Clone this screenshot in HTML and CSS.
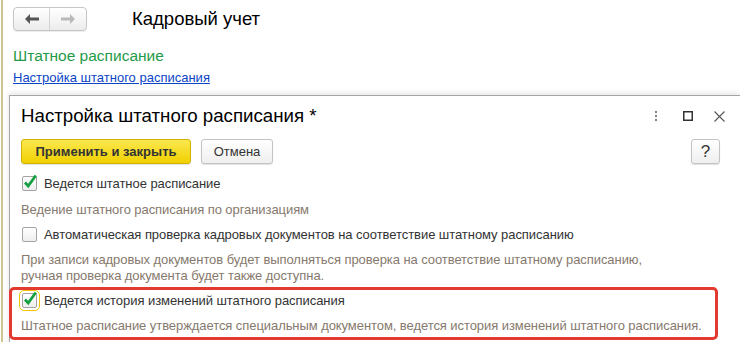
FILE: index.html
```html
<!DOCTYPE html>
<html lang="ru">
  <head>
    <meta charset="UTF-8" />
    <meta name="viewport" content="width=device-width, initial-scale=1.0" />
    <title>Кадровый учет</title>
    <link rel="stylesheet" href="styles.css">
  </head>
  <body>
    <div class="page">
      <div class="head">
        <div class="nav">
          <button class="nav-btn back">
            <svg width="14" height="10" viewBox="0 0 14 10"><path d="M0 5 L5 0 L5 3.5 L14 3.5 L14 6.5 L5 6.5 L5 10 Z" fill="#555" /></svg>
          </button>
          <button class="nav-btn fwd">
            <svg width="14" height="10" viewBox="0 0 14 10"><path d="M14 5 L9 0 L9 3.5 L0 3.5 L0 6.5 L9 6.5 L9 10 Z" fill="#b9b9b9" /></svg>
          </button>
        </div>
        <div class="page-title">Кадровый учет</div>
      </div>

      <div class="section-title">Штатное расписание</div>
      <a class="link" href="#">Настройка штатного расписания</a>

      <div class="dialog">
        <div class="dialog-head">
          <div class="dialog-title">Настройка штатного расписания *</div>
          <div class="win-ctrls">
            <svg class="dots" width="4" height="12" viewBox="0 0 4 12"><circle cx="2" cy="2" r="1.2" fill="#888" /><circle cx="2" cy="6" r="1.2" fill="#888" /><circle cx="2" cy="10" r="1.2" fill="#888" /></svg>
            <svg class="maxi" width="10" height="10" viewBox="0 0 10 10"><rect x="0.75" y="0.75" width="8.5" height="8.5" fill="none" stroke="#333" stroke-width="1.5" /></svg>
            <svg width="11" height="11" viewBox="0 0 11 11"><path d="M0.5 0.5 L10.5 10.5 M10.5 0.5 L0.5 10.5" stroke="#555" stroke-width="1.1" /></svg>
          </div>
        </div>

        <div class="toolbar">
          <button class="btn btn-main">Применить и закрыть</button>
          <button class="btn btn-cancel">Отмена</button>
          <button class="btn btn-help">?</button>
        </div>

        <label class="check-row row-1">
          <span class="check">
            <svg width="16" height="16" viewBox="0 0 16 16"><path d="M3 7.5 L6.2 11 L13.8 0.5" fill="none" stroke="#17a043" stroke-width="2.8" /></svg>
          </span>
          Ведется штатное расписание
        </label>
        <div class="hint hint-1">Ведение штатного расписания по организациям</div>

        <label class="check-row row-2">
          <span class="check"></span>
          Автоматическая проверка кадровых документов на соответствие штатному расписанию
        </label>
        <div class="hint hint-2">При записи кадровых документов будет выполняться проверка на соответствие штатному расписанию,<br>ручная проверка документа будет также доступна.</div>

        <div class="marked">
          <label class="check-row">
            <span class="check focused">
              <svg width="16" height="16" viewBox="0 0 16 16"><path d="M3 7.5 L6.2 11 L13.8 0.5" fill="none" stroke="#17a043" stroke-width="2.8" /></svg>
            </span>
            Ведется история изменений штатного расписания
          </label>
          <div class="hint hint-3">Штатное расписание утверждается специальным документом, ведется история изменений штатного расписания.</div>
        </div>
      </div>
    </div>
  </body>
</html>
```

FILE: styles.css
```css
body {
  margin: 0;
  background-color: white;
  font-family: "Liberation Sans", Arial, sans-serif;
  color: #333;
  overflow: hidden;
}

.page {
  margin-left: 1px;
  border-left: 2px solid #cfc48f;
  min-height: 100vh;
  padding-left: 10px;
}

.head {
  display: flex;
  align-items: center;
  padding-top: 7px;
}

.nav {
  display: flex;
  height: 22px;
  border: 1px solid #c6c6c6;
  border-radius: 4px;
  background: linear-gradient(#ffffff, #ececec);
  box-shadow: 0 1px 1px rgba(0, 0, 0, 0.08);
}

.nav-btn {
  display: flex;
  align-items: center;
  justify-content: center;
  width: 36px;
  padding: 0;
  border: none;
  background: transparent;
}

.nav-btn.back {
  border-right: 1px solid #d4d4d4;
}

.page-title {
  margin-left: 45px;
  font-size: 18.5px;
  color: black;
  line-height: 24px;
}

.section-title {
  margin-top: 15px;
  font-size: 15.5px;
  line-height: 20px;
  color: #1f9a48;
}

.link {
  display: block;
  margin-top: 4px;
  font-size: 13px;
  line-height: 16px;
  color: #0b45c6;
}

.dialog {
  margin-top: 9px;
  margin-left: -4px;
  padding-left: 11px;
  border-top: 1px solid #a5a5a5;
  border-left: 1px solid #a5a5a5;
  box-shadow: 0 -2px 6px rgba(0, 0, 0, 0.1);
  min-height: 260px;
}

.dialog-head {
  display: flex;
  align-items: center;
  width: 704px;
  margin-top: 8px;
  height: 24px;
}

.dialog-title {
  flex: 1;
  font-size: 18.7px;
  color: black;
}

.win-ctrls {
  display: flex;
  align-items: center;
}

.maxi {
  margin: 0 21px 0 25px;
}

.toolbar {
  display: flex;
  width: 699px;
  gap: 10px;
  margin-top: 11px;
}

.btn {
  height: 25px;
  padding: 0;
  border-radius: 3px;
  font-family: inherit;
  font-size: 13px;
  color: #333;
  box-shadow: 0 1px 1px rgba(0, 0, 0, 0.12);
}

.btn-main {
  width: 170px;
  font-weight: bold;
  border: 1px solid #d2b100;
  background: linear-gradient(#fbe84f, #f0d000);
}

.btn-cancel {
  width: 72px;
  border: 1px solid #c3c3c3;
  background: linear-gradient(#ffffff, #efefef);
}

.btn-help {
  width: 29px;
  margin-left: auto;
  border: 1px solid #c3c3c3;
  background: linear-gradient(#ffffff, #efefef);
  font-size: 17px;
}

.check-row {
  display: flex;
  align-items: center;
  height: 20px;
  font-size: 13px;
  letter-spacing: -0.06px;
  color: #333;
}

.check {
  position: relative;
  width: 13px;
  height: 13px;
  margin: 0 7px 0 1px;
  border: 1px solid #a3a3a3;
  border-radius: 2px;
  background: linear-gradient(#ffffff, #eeeeee);
}

.check svg {
  position: absolute;
  left: -1px;
  top: -2px;
  overflow: visible;
}

.check.focused {
  outline: 1px solid #f2c200;
  outline-offset: 2px;
}

.hint {
  font-size: 13px;
  line-height: 16px;
  letter-spacing: -0.07px;
  color: #86796d;
}

.row-1 {
  margin-top: 9px;
}

.hint-1 {
  margin-top: 9px;
}

.row-2 {
  margin-top: 6px;
}

.hint-2 {
  margin-top: 8px;
}

.marked {
  width: 694px;
  margin-top: 3px;
  margin-left: -12px;
  padding: 0 0 3px 9px;
  border: 3px solid #e23a30;
  border-radius: 5px;
}

.hint-3 {
  margin-top: 8px;
}
```
